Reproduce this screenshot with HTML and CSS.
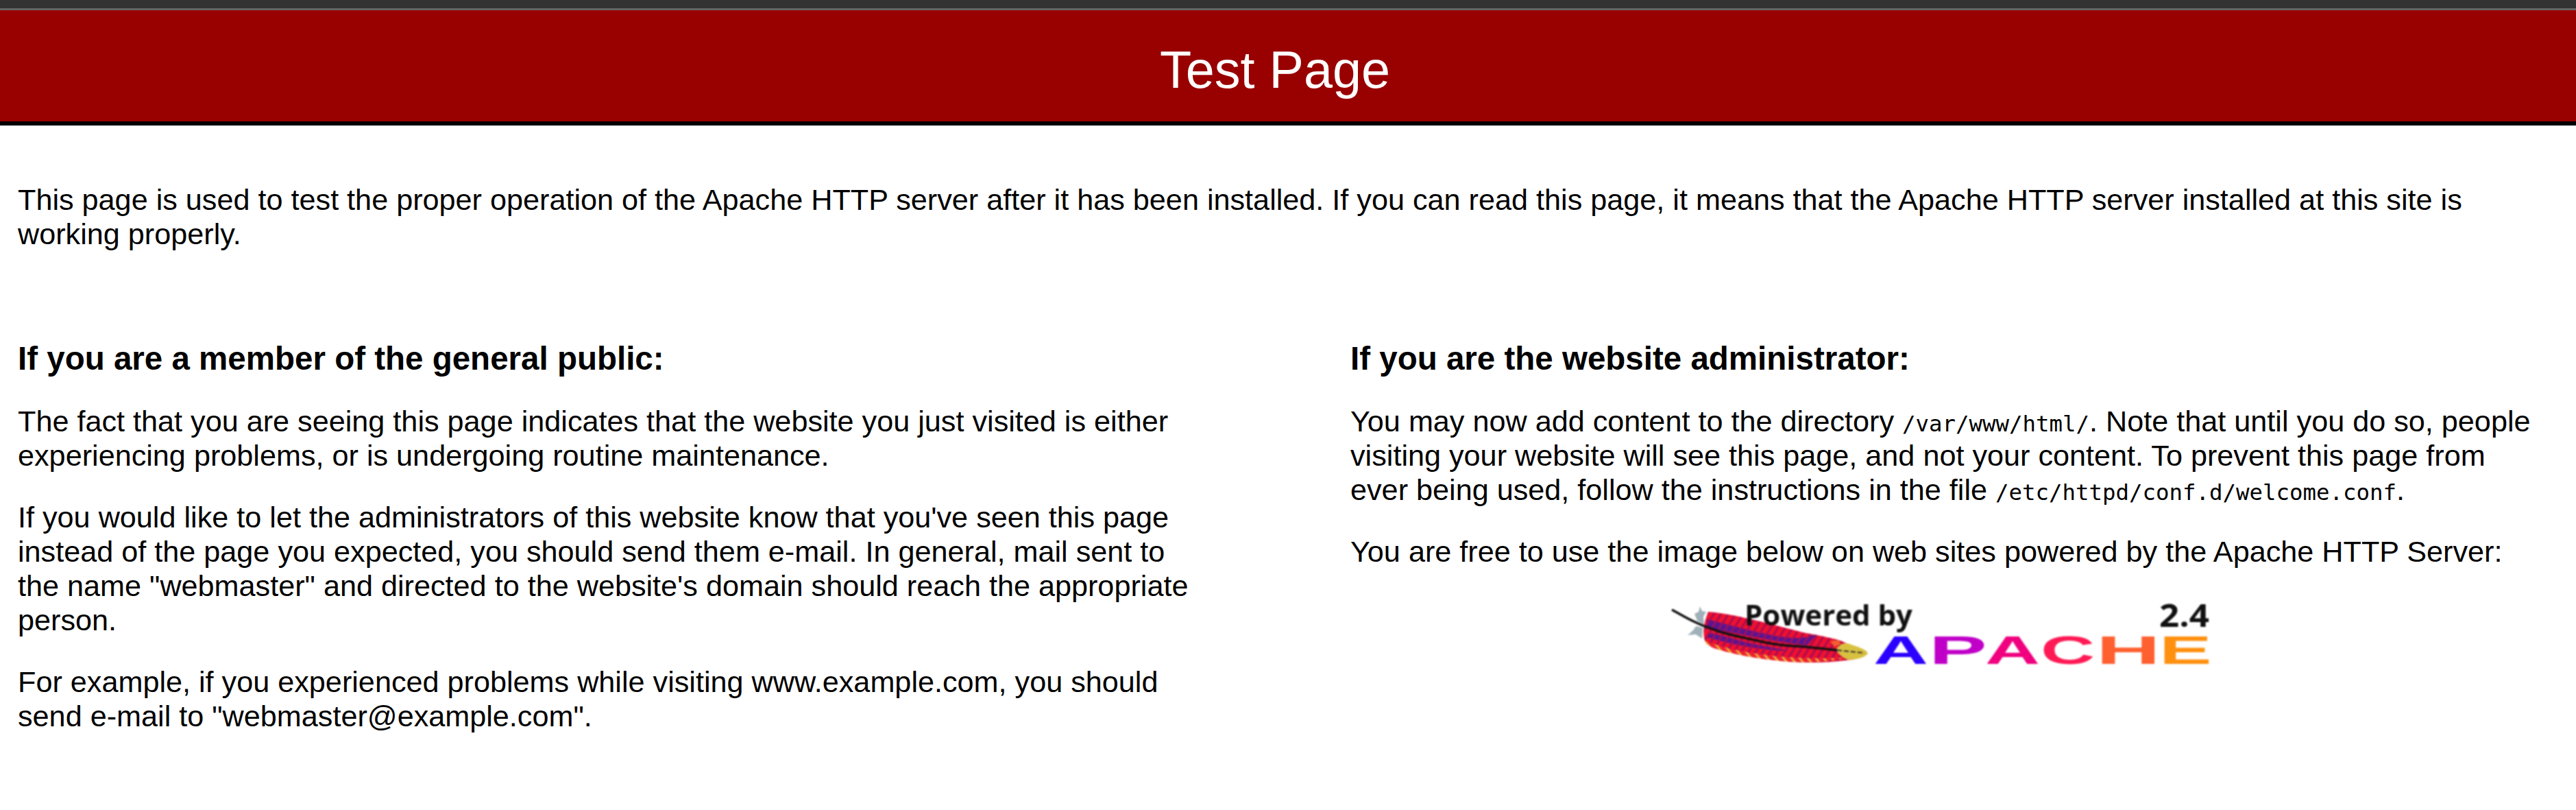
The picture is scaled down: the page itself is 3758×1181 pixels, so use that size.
FILE: index.html
```html
<!DOCTYPE html>
<html lang="en">
<head>
  <meta charset="UTF-8">
  <title>Test Page</title>
  <link rel="stylesheet" href="styles.css">
</head>
<body>
  <div class="top-bar"></div>
  <h1>Test Page</h1>
  <div class="content">
    <p class="lead">This page is used to test the proper operation of the Apache HTTP server after it has been installed. If you can read this page, it means that the Apache HTTP server installed at this site is working properly.</p>
  </div>
  <div class="columns">
    <div class="column left">
      <h2>If you are a member of the general public:</h2>
      <p>The fact that you are seeing this page indicates that the website you just visited is either experiencing problems, or is undergoing routine maintenance.</p>
      <p>If you would like to let the administrators of this website know that you've seen this page instead of the page you expected, you should send them e-mail. In general, mail sent to the name "webmaster" and directed to the website's domain should reach the appropriate person.</p>
      <p>For example, if you experienced problems while visiting www.example.com, you should send e-mail to "webmaster@example.com".</p>
    </div>
    <div class="column right">
      <h2>If you are the website administrator:</h2>
      <p>You may now add content to the directory <code>/var/www/html/</code>. Note that until you do so, people visiting your website will see this page, and not your content. To prevent this page from ever being used, follow the instructions in the file <code>/etc/httpd/conf.d/welcome.conf</code>.</p>
      <p>You are free to use the image below on web sites powered by the Apache HTTP Server:</p>
      <div class="logo">
        <svg width="804" height="110" viewBox="0 0 804 110" class="logo-img">
          <defs>
            <pattern id="hatch" width="9" height="9" patternUnits="userSpaceOnUse" patternTransform="rotate(32)">
              <rect width="9" height="9" fill="#f01030"/>
              <rect width="3" height="9" fill="#a80c50"/>
            </pattern>
            <pattern id="hatch-purple" width="9" height="9" patternUnits="userSpaceOnUse" patternTransform="rotate(32)">
              <rect width="9" height="9" fill="#5a1490"/>
              <rect width="2" height="9" fill="#b01050"/>
            </pattern>
            <pattern id="hatch-low" width="9" height="9" patternUnits="userSpaceOnUse" patternTransform="rotate(-40)">
              <rect width="9" height="9" fill="#f02030"/>
              <rect width="3" height="9" fill="#e8b040"/>
            </pattern>
          </defs>
          <path d="M62 23 C100 26 150 40 200 53 C225 58 250 62 262 68 L290 86 C280 92 272 93 262 94 C230 98 200 98 170 94 C135 90 100 84 83 78 C70 74 60 70 57 65 C54 55 55 40 62 23 Z" fill="url(#hatch)"/>
          <path d="M70 76 C62 72 58 70 57 65 C68 70 100 80 133 84 C170 90 210 92 262 90 C230 98 190 98 160 94 C125 90 95 84 70 76 Z" fill="url(#hatch-low)"/>
          <path d="M60 34 C85 40 120 50 150 56 C175 62 195 62 205 60 L220 56 L206 72 C170 68 120 58 60 46 Z" fill="url(#hatch-purple)"/>
          <path d="M66 54 C95 60 120 70 150 74 L180 80 C150 80 100 72 60 60 Z" fill="url(#hatch-purple)"/>
          <path d="M240 66 L252 64 L256 70 L246 74 Z" fill="#f06030"/>
          <path d="M248 78 C254 70 262 67 268 70 C280 74 294 78 295 84 C290 90 278 93 266 93 C258 90 252 85 248 78 Z" fill="#d8c040"/>
          <path d="M9 20 C22 27 33 34 43 38 C55 44 62 46 73 50 C90 56 110 60 133 65 C150 69 165 72 187 73 C205 74 222 76 250 79" fill="none" stroke="#111" stroke-width="3.5"/>
          <path d="M250 79 L290 83" fill="none" stroke="#333" stroke-width="2" stroke-dasharray="7 3"/>
          <path d="M50 15 L53 22 L59 23 L55 30 L56 42 L46 36 L42 26 L48 23 Z" fill="#9fb0b8"/>
          <path d="M54 46 L53 62 L44 56 L32 57 L40 50 L44 44 Z" fill="#9fb0b8"/>
          <text x="115" y="43" class="logo-text" font-size="42" textLength="245" lengthAdjust="spacingAndGlyphs">Powered by</text>
          <text x="720" y="45" class="logo-text" font-size="46" textLength="73" lengthAdjust="spacingAndGlyphs">2.4</text>
          <text transform="translate(303 99) scale(1.91 1)" class="apache" fill="#2b00ff">A</text>
          <text transform="translate(384 99) scale(2.19 1)" class="apache" fill="#c000c8">P</text>
          <text transform="translate(466 99) scale(1.91 1)" class="apache" fill="#f0007f">A</text>
          <text transform="translate(547 99) scale(1.89 1)" class="apache" fill="#ff1a55">C</text>
          <text transform="translate(628 99) scale(2.24 1)" class="apache" fill="#ff6030">H</text>
          <text transform="translate(720 99) scale(1.98 1)" class="apache" fill="#ff9010">E</text>
        </svg>
      </div>
    </div>
  </div>
</body>
</html>
```

FILE: styles.css
```css
body { margin: 0; background: #fff; color: #000; font-family: "Liberation Sans", Arial, sans-serif; font-size: 43.2px; line-height: 50px; }
.top-bar { height: 12px; background: #333; border-bottom: 3px solid #666; }
h1 { margin: 0; padding: 44px 78px 32px 40px; background: #900; color: #fff; font-weight: normal; font-size: 75.6px; line-height: 86px; text-align: center; border-bottom: 6px solid #000; }
p { margin: 0 0 40px; }
h2 { margin: 0 0 39px; font-size: 47.52px; line-height: 54px; font-weight: bold; }
code { font-family: "DejaVu Sans Mono", monospace; font-size: 32.4px; line-height: 1; }
.content { padding: 83px 64px 0 26px; }
.lead { margin: 0; }
.columns { display: flex; padding: 130px 64px 0 26px; }
.left { width: 1710px; margin-right: 234px; }
.right { flex: 1; }
.logo-img { display: block; margin: 35px auto 0; filter: blur(1.2px); }
.logo-text { font-family: "Open Sans", sans-serif; font-weight: bold; fill: #111; }
.apache { font-family: "Liberation Sans", sans-serif; font-weight: bold; font-size: 58px; }
```
